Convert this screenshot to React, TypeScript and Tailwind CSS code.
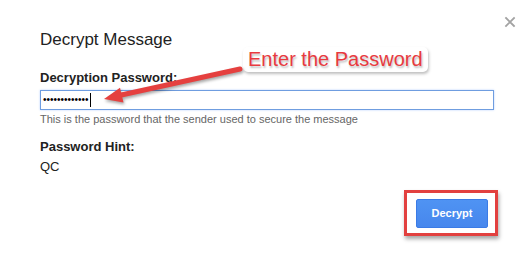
import React from "react";

export default function App() {
  return (
    <div className="relative w-[530px] h-[260px] bg-white overflow-hidden font-['Liberation_Sans',Arial,sans-serif] text-[#222]">
      <button className="absolute left-[504px] top-[16px] w-[12px] h-[12px] flex items-center justify-center">
        <svg width="12" height="12" viewBox="0 0 12 12">
          <path d="M2 2 L10 10 M10 2 L2 10" stroke="#a3a3a3" strokeWidth="1.8" strokeLinecap="square" />
        </svg>
      </button>

      <div className="flex flex-col pl-[40px] pr-[36px] pt-[30px]">
        <h1 className="text-[17px] leading-[20px] text-[#222]">Decrypt Message</h1>

        <label className="mt-[20px] text-[13px] leading-[16px] font-bold">Decryption Password:</label>
        <div className="mt-[4px] h-[20px] border border-[#6f9de0] shadow-[0_0_2px_rgba(77,144,254,0.4)] flex items-center pl-[2px]">
          <span className="text-[10px] leading-[10px] tracking-[0px] text-black">•••••••••••••</span>
          <span className="w-px h-[14px] bg-black ml-[1px]" />
        </div>
        <p className="mt-[3px] text-[11px] leading-[13px] text-[#666]">
          This is the password that the sender used to secure the message
        </p>

        <div className="mt-[13px] text-[13px] leading-[16px] font-bold">Password Hint:</div>
        <div className="mt-[4px] text-[13px] leading-[16px]">QC</div>

        <div className="mt-[24px] flex justify-end pr-[6px]">
          <button className="w-[72px] h-[29px] rounded-[2px] border border-[#3b7be6] bg-gradient-to-b from-[#4f93f3] to-[#4787ed] text-white text-[11px] font-bold leading-none">
            Decrypt
          </button>
        </div>
      </div>

      {/* annotation: red box around button */}
      <div className="absolute left-[404px] top-[190px] w-[94px] h-[46px] border-[3px] border-[#e2403f] shadow-[1px_3px_4px_rgba(0,0,0,0.35)] pointer-events-none" />

      {/* annotation: callout */}
      <div className="absolute left-[243px] top-[47px] h-[25px] px-[5px] rounded-[5px] bg-white shadow-[1px_2px_3px_rgba(0,0,0,0.25)] text-[20px] leading-[25px] text-[#e83a3f] whitespace-nowrap [text-shadow:1px_2px_2px_rgba(0,0,0,0.25)]">
        Enter the Password
      </div>

      {/* annotation: arrow */}
      <svg
        className="absolute left-0 top-0 pointer-events-none"
        width="530"
        height="260"
        viewBox="0 0 530 260"
        style={{ filter: "drop-shadow(1px 2px 1.5px rgba(0,0,0,0.35))" }}
      >
        <line x1="240" y1="69" x2="119" y2="95.5" stroke="#e5403f" strokeWidth="5" strokeLinecap="round" />
        <polygon points="104,99 123.5,102.5 120,87.8" fill="#e5403f" />
      </svg>
    </div>
  );
}
